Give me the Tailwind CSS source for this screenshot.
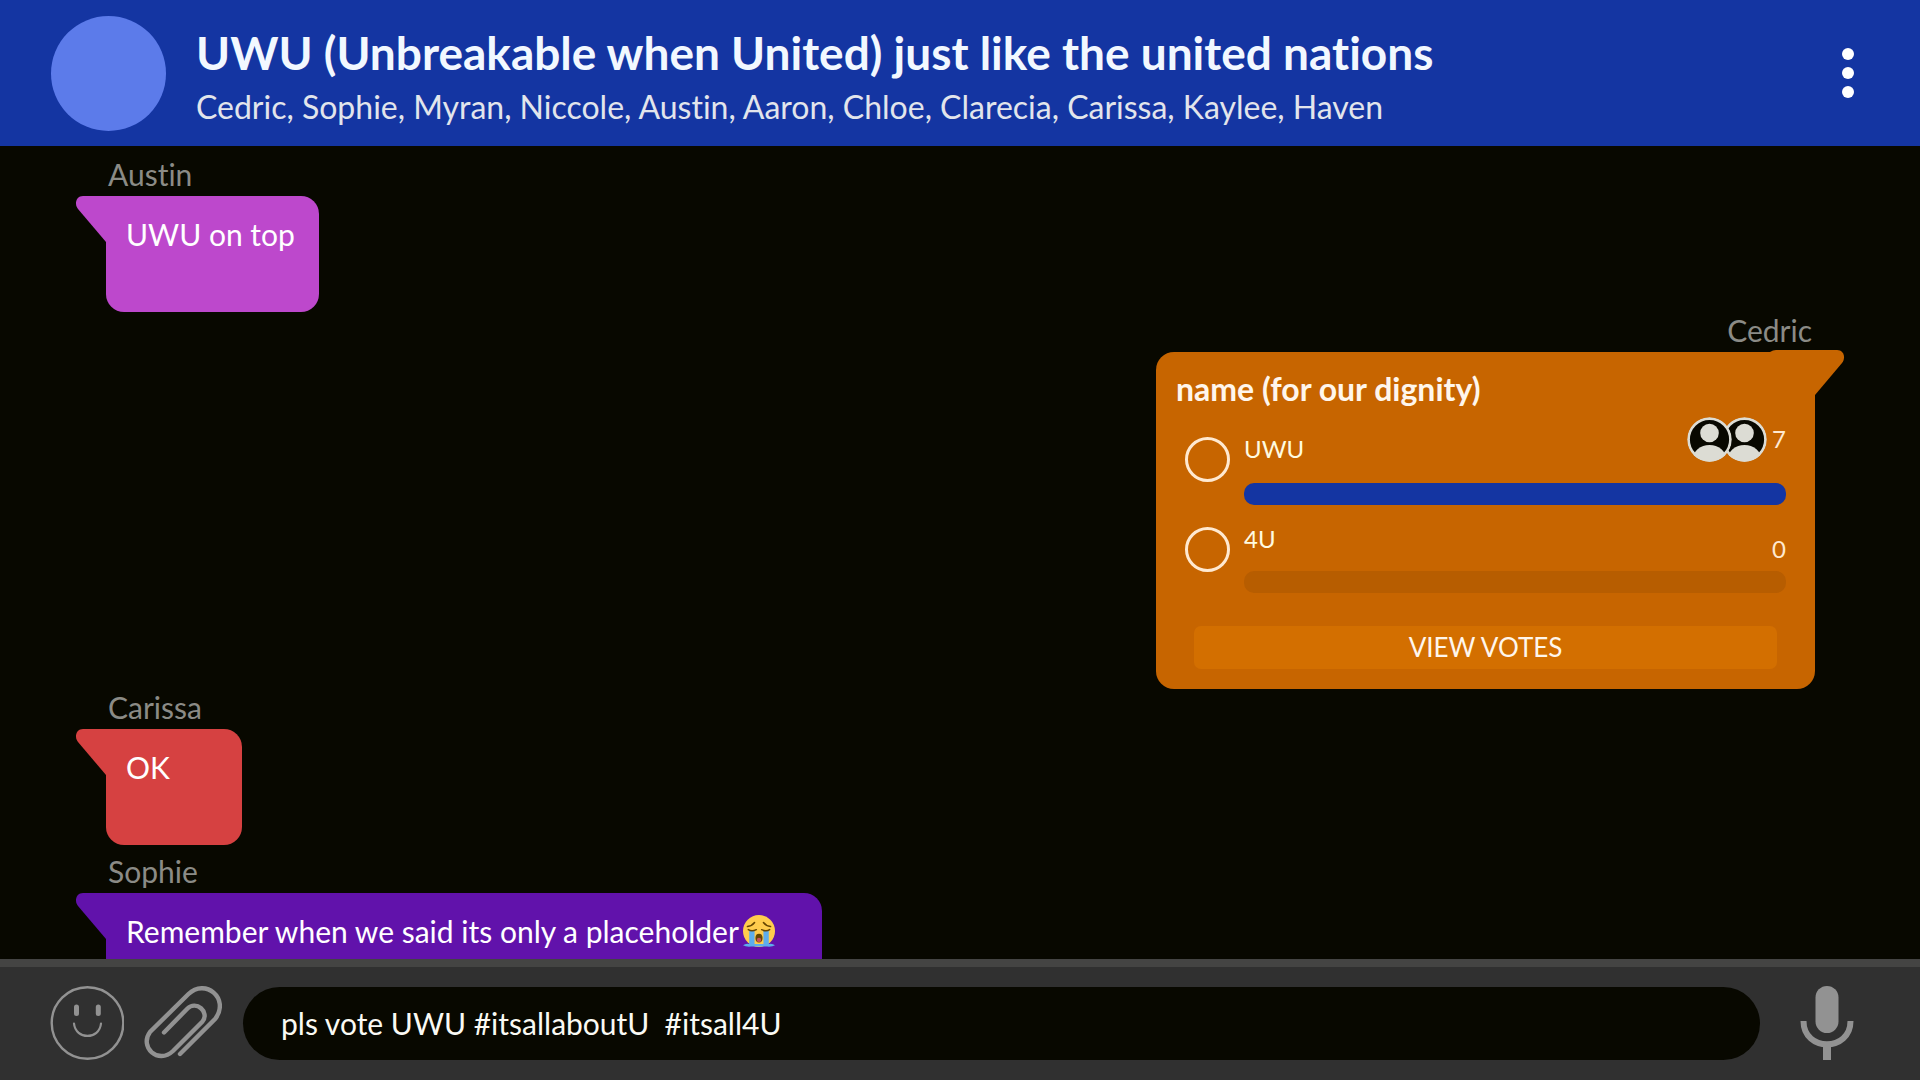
<!DOCTYPE html>
<html lang="en">
<head>
<meta charset="utf-8">
<title>UWU group chat</title>
<script src="https://cdn.jsdelivr.net/npm/@tailwindcss/browser@4"></script>
</head>
<body class="flex h-screen flex-col overflow-hidden bg-[#080800] font-['Lato',sans-serif] text-white [font-variant-ligatures:none]">
  <header class="flex h-[146px] shrink-0 items-center bg-[#1435a2] pr-[60px] pl-[51px]">
    <div class="size-[115px] shrink-0 rounded-full bg-[#5c7bea]"></div>
    <div class="ml-[30px] min-w-0 flex-1 pt-2 whitespace-nowrap">
      <h1 class="text-[46px] leading-[60px] font-bold text-[#f2f8ff]">UWU (Unbreakable when United) just like the united nations</h1>
      <p class="text-[32px] leading-[48px] text-[#e2e5ec]">Cedric, Sophie, Myran, Niccole, Austin, Aaron, Chloe, Clarecia, Carissa, Kaylee, Haven</p>
    </div>
    <button type="button" aria-label="Menu" class="flex w-6 flex-col items-center gap-[7px]">
      <span class="size-3 rounded-full bg-white"></span>
      <span class="size-3 rounded-full bg-white"></span>
      <span class="size-3 rounded-full bg-white"></span>
    </button>
  </header>

  <main class="min-h-0 flex-1 overflow-hidden pt-[10px] pr-[105px] pl-[106px]">
    <article class="flex flex-col items-start">
      <h2 class="mb-1 pl-[2px] text-[30px] leading-9 text-[#8b8b86]">Austin</h2>
      <div class="relative h-[116px] w-[213px] rounded-[18px] bg-[#bd48cc] px-5 pt-4 text-[30px] leading-[44px] whitespace-nowrap">
        <svg class="absolute top-0 -left-[30px] h-[46px] w-[60px] text-[#bd48cc]" viewBox="0 0 60 46" fill="currentColor"><path d="M7 0H60V46H30L2 13C-2 8 0 0 7 0Z"/></svg>
        <p class="relative">UWU on top</p>
      </div>
    </article>

    <article class="flex flex-col items-end">
      <h2 class="mb-1 pr-[3px] text-[30px] leading-9 text-[#8b8b86]">Cedric</h2>
      <form class="relative h-[337px] w-[659px] rounded-[18px] bg-[#c76500] pt-[15px] pr-[29px] pl-5">
        <svg class="absolute -top-[2px] -right-[30px] h-[46px] w-[75px] text-[#c76500]" viewBox="0 0 75 46" fill="currentColor"><path d="M0 2Q3 0 6 0H67C74 0 76 8 72 13L45 45H0Z"/></svg>
        <h3 class="relative text-[32px] leading-[44px] font-bold text-[#fff6ec]">name (for our dignity)</h3>
        <div class="mt-[6px] flex h-[90px] gap-[14px] pl-[9px]">
          <input id="uwu" type="radio" name="vote" class="mt-5 size-[45px] shrink-0 appearance-none rounded-full border-3 border-[#ffe9d0]">
          <div class="flex-1">
            <div class="flex h-[66px] justify-between">
              <label for="uwu" class="pt-[14px] text-[24px] leading-9 text-[#fffbe0]">UWU</label>
              <div class="flex items-start">
                <svg class="h-[45px] w-20" viewBox="0 0 80 45">
                  <defs>
                    <clipPath id="disc"><circle cx="22.500" cy="22.500" r="22.300"/></clipPath>
                    <g id="person" clip-path="url(#disc)">
                      <circle cx="22.500" cy="22.500" r="21" fill="#080800" stroke="#dcdcd4" stroke-width="2.800"/>
                      <circle cx="22.500" cy="16" r="9.300" fill="#dcdcd4"/>
                      <ellipse cx="22.500" cy="42" rx="16.500" ry="14" fill="#dcdcd4"/>
                    </g>
                  </defs>
                  <use href="#person" x="35"/>
                  <use href="#person"/>
                </svg>
                <span class="w-[19px] pt-1 text-right text-[24px] leading-9 text-[#ffe9d0]">7</span>
              </div>
            </div>
            <div class="h-[22px] rounded-[10px] bg-[#1435a2]"></div>
          </div>
        </div>
        <div class="flex h-[90px] gap-[14px] pl-[9px]">
          <input id="four" type="radio" name="vote" class="mt-5 size-[45px] shrink-0 appearance-none rounded-full border-3 border-[#ffe9d0]">
          <div class="flex-1">
            <div class="flex h-16 justify-between">
              <label for="four" class="pt-[14px] text-[24px] leading-9 text-[#fffbe0]">4U</label>
              <span class="pt-6 text-[24px] leading-9 text-[#ffe9d0]">0</span>
            </div>
            <div class="h-[22px] rounded-[10px] bg-[#b75d00]"></div>
          </div>
        </div>
        <button type="button" class="mt-[29px] ml-[18px] block h-[43px] w-[583px] rounded-[7px] bg-[#d36f00] text-[26px] leading-[43px] text-[#fff6ec]">VIEW VOTES</button>
      </form>
    </article>

    <article class="flex flex-col items-start">
      <h2 class="mb-1 pl-[2px] text-[30px] leading-9 text-[#8b8b86]">Carissa</h2>
      <div class="relative h-[116px] w-[136px] rounded-[18px] bg-[#d64141] px-5 pt-4 text-[30px] leading-[44px] whitespace-nowrap">
        <svg class="absolute top-0 -left-[30px] h-[46px] w-[60px] text-[#d64141]" viewBox="0 0 60 46" fill="currentColor"><path d="M7 0H60V46H30L2 13C-2 8 0 0 7 0Z"/></svg>
        <p class="relative">OK</p>
      </div>
    </article>

    <article class="mt-2 flex flex-col items-start">
      <h2 class="mb-1 pl-[2px] text-[30px] leading-9 text-[#8b8b86]">Sophie</h2>
      <div class="relative h-[116px] w-[716px] rounded-[18px] bg-[#6112ab] px-5 pt-4 text-[30px] leading-[44px] whitespace-nowrap">
        <svg class="absolute top-0 -left-[30px] h-[46px] w-[60px] text-[#6112ab]" viewBox="0 0 60 46" fill="currentColor"><path d="M7 0H60V46H30L2 13C-2 8 0 0 7 0Z"/></svg>
        <p class="relative flex items-center gap-1">Remember when we said its only a placeholder
          <svg class="size-8" viewBox="0 0 36 36" role="img" aria-label="Loudly crying">
            <circle cx="18" cy="18" r="18" fill="#ffcc4d"/>
            <path d="M0 34Q3 31.500 7 32.500H29Q33 31.500 36 34Q33 36 27 35.500H9Q3 36 0 34Z" fill="#5dadec"/>
            <path d="M7 17H13V35H7ZM23 17H29V35H23Z" fill="#5dadec"/>
            <ellipse cx="18" cy="26" rx="4" ry="5" fill="#664500"/>
            <ellipse cx="18" cy="28" rx="2.500" ry="2.500" fill="#c9525c"/>
            <path d="M6 16.500Q10 19 15 16.500M21 16.500Q26 19 30 16.500M5 13Q10 12.500 13 8.500M31 13Q26 12.500 23 8.500" fill="none" stroke="#664500" stroke-width="1.700" stroke-linecap="round"/>
          </svg>
        </p>
      </div>
    </article>
  </main>

  <footer class="flex h-[121px] shrink-0 items-center border-t-8 border-[#444443] bg-[#303030] pr-[66px] pb-[1px] pl-[50px] text-[#929292]">
    <button type="button" aria-label="Emoji">
      <svg class="size-[74px]" viewBox="0 0 74 74" fill="none" stroke="currentColor" stroke-linecap="round">
        <circle cx="37.500" cy="37" r="35.800" stroke-width="2.400"/>
        <path d="M26.500 21V27.500M48.300 21V27.500" stroke-width="5"/>
        <path d="M24 37.500C25.500 54 49.500 54 51 37.500" stroke-width="2.200"/>
      </svg>
    </button>
    <button type="button" aria-label="Attach" class="ml-5">
      <svg class="h-[74px] w-[78px]" viewBox="0 0 78 74" fill="none" stroke="currentColor" stroke-width="4.400" stroke-linecap="round">
        <path d="M20 46.500L43.500 22.500C52 14 66 26 58.500 35.500L29 65C14 79-5 61 6 46L44.500 8C61-8 86 12 71.500 32.500L36 68"/>
      </svg>
    </button>
    <input type="text" aria-label="Message" value="pls vote UWU #itsallaboutU  #itsall4U" class="ml-[21px] h-[73px] min-w-0 flex-1 rounded-full bg-[#080800] px-[38px] text-[30px] text-[#fafaf4] outline-none">
    <button type="button" aria-label="Record" class="ml-10">
      <svg class="h-[74px] w-[54px]" viewBox="0 0 54 74" fill="none" stroke="currentColor">
        <rect x="15.500" y="0" width="23" height="47" rx="11.500" fill="currentColor" stroke="none"/>
        <path d="M3.500 35C3.500 66 50.500 66 50.500 35" stroke-width="6"/>
        <path d="M27 57V74" stroke-width="8"/>
      </svg>
    </button>
  </footer>
</body>
</html>
